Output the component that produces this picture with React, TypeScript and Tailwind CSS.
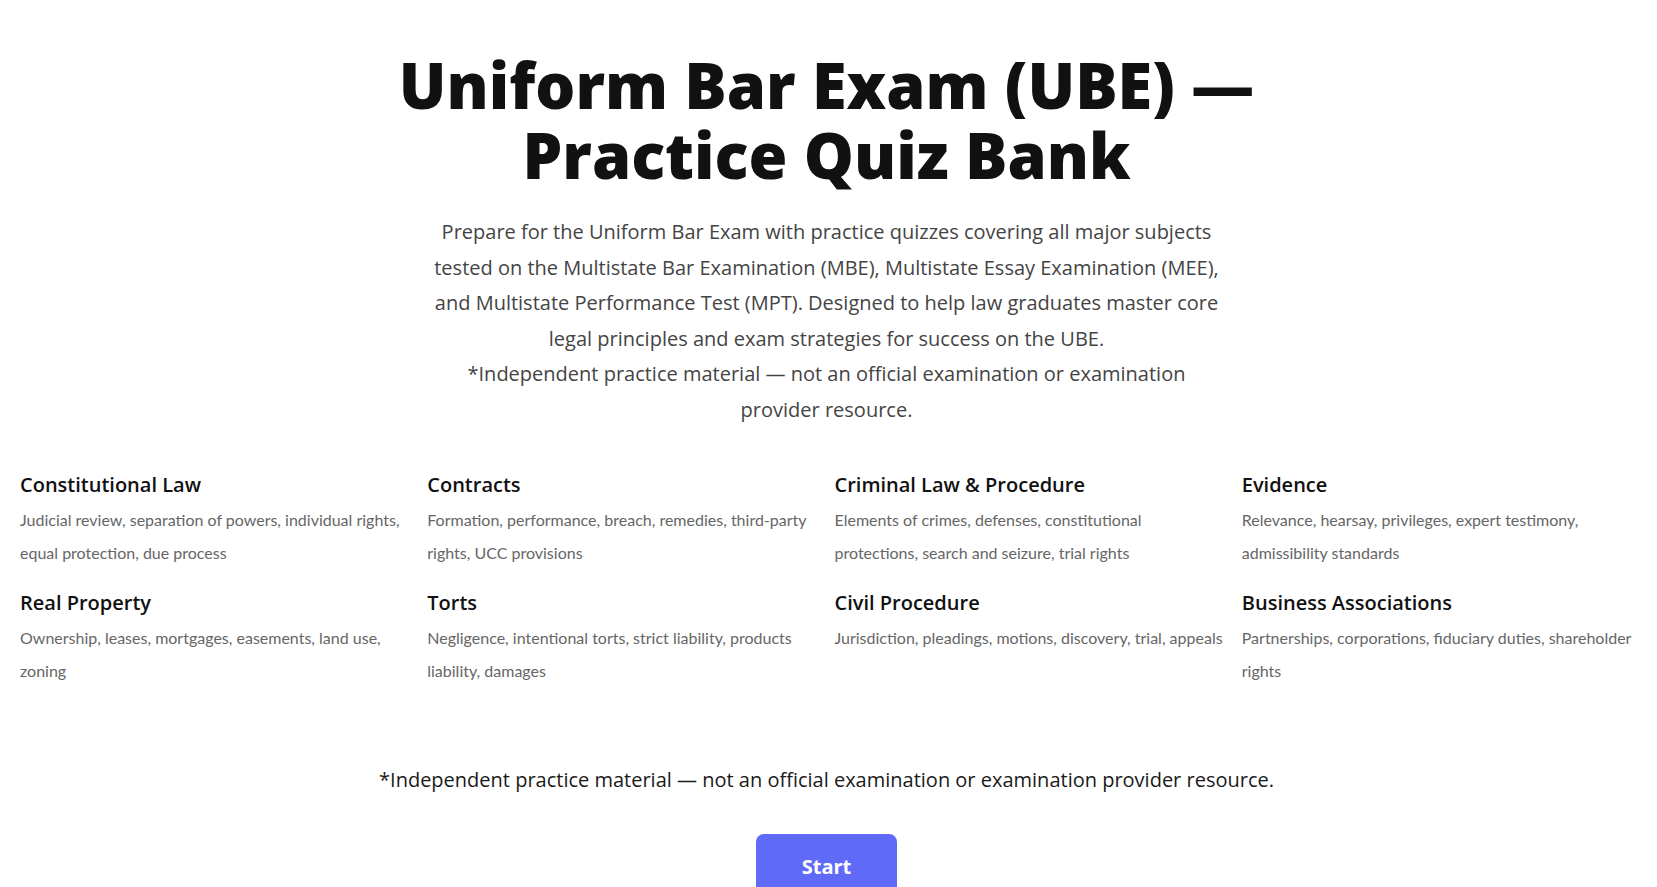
const subjects = [
  {
    title: "Constitutional Law",
    description: "Judicial review, separation of powers, individual rights, equal protection, due process",
  },
  {
    title: "Contracts",
    description: "Formation, performance, breach, remedies, third-party rights, UCC provisions",
  },
  {
    title: "Criminal Law & Procedure",
    description: "Elements of crimes, defenses, constitutional protections, search and seizure, trial rights",
  },
  {
    title: "Evidence",
    description: "Relevance, hearsay, privileges, expert testimony, admissibility standards",
  },
  {
    title: "Real Property",
    description: "Ownership, leases, mortgages, easements, land use, zoning",
  },
  {
    title: "Torts",
    description: "Negligence, intentional torts, strict liability, products liability, damages",
  },
  {
    title: "Civil Procedure",
    description: "Jurisdiction, pleadings, motions, discovery, trial, appeals",
  },
  {
    title: "Business Associations",
    description: "Partnerships, corporations, fiduciary duties, shareholder rights",
  },
];

export default function App() {
  return (
    <div className="min-h-screen bg-white pl-5 pr-6 pt-[50px] pb-10 font-['Open_Sans',sans-serif]">
      {/* Header */}
      <div className="text-center">
        <h1 className="mx-auto max-w-[900px] text-[63px] font-extrabold leading-[70px] text-[#111]">
          Uniform Bar Exam (UBE) — Practice Quiz Bank
        </h1>
        <p className="mx-auto mt-6 max-w-[792px] text-[20px] leading-[35.5px] text-[#444]">
          Prepare for the Uniform Bar Exam with practice quizzes covering all major subjects tested on the
          Multistate Bar Examination (MBE), Multistate Essay Examination (MEE), and Multistate Performance
          Test (MPT). Designed to help law graduates master core legal principles and exam strategies for
          success on the UBE.
          <br />
          *Independent practice material — not an official examination or examination provider resource.
        </p>
      </div>

      {/* Subjects */}
      <div className="mt-11 grid grid-cols-4 gap-x-4 gap-y-5">
        {subjects.map((s) => (
          <div key={s.title}>
            <h3 className="mb-1 text-[20px] font-semibold leading-[28px] text-[#111]">{s.title}</h3>
            <p className="font-['Lato',sans-serif] text-[16px] leading-[33px] text-[#666]">{s.description}</p>
          </div>
        ))}
      </div>

      {/* Footer */}
      <p className="mt-[79px] text-center text-[20px] leading-[28px] text-[#1a1a1a]">
        *Independent practice material — not an official examination or examination provider resource.
      </p>
      <div className="mt-10 flex justify-center">
        <button className="rounded-lg bg-[#5f6bf8] px-[46px] py-[19px] text-[20px] font-bold leading-[28px] text-white">
          Start
        </button>
      </div>
    </div>
  );
}
